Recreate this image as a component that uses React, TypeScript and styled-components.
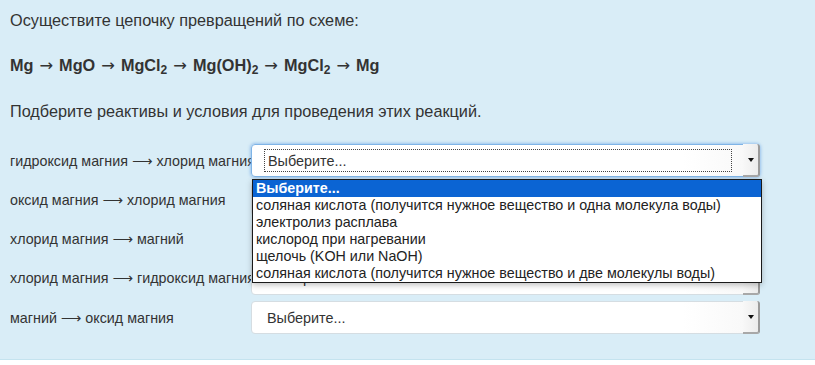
import React from "react";
import styled, { createGlobalStyle } from "styled-components";

const GlobalStyle = createGlobalStyle`
    html, body {
        margin: 0;
        padding: 0;
        background: #ffffff;
    }
    body {
        font-family: "Liberation Sans", Arial, sans-serif;
        color: #333333;
    }
`;

const Panel = styled.div`
    display: flex;
    flex-direction: column;
    background: #d9edf7;
    border-bottom: 1px solid #c4e3ef;
    padding: 10px 10px 25px 10px;
`;

const Text = styled.p<{ $bold?: boolean; $mb: number }>`
    margin: 0 0 ${(p) => p.$mb}px 0;
    font-size: 16.25px;
    line-height: 20px;
    font-weight: ${(p) => (p.$bold ? "bold" : "normal")};
    color: #333333;
`;

const Sub = styled.sub`
    font-size: 12px;
    vertical-align: -3px;
    line-height: 0;
`;

const Arr = styled.span<{ $long?: boolean }>`
    font-family: "DejaVu Sans", sans-serif;
    font-weight: normal;
    margin: 0 ${(p) => (p.$long ? "0" : "1.5px")};
`;

const Form = styled.div`
    display: flex;
    flex-direction: column;
    gap: 6.25px;
`;

const Row = styled.div`
    display: grid;
    grid-template-columns: 241px 509px;
    align-items: center;
    position: relative;
`;

const Label = styled.div`
    font-size: 14.3px;
    color: #333333;
    white-space: nowrap;
`;

const Select = styled.div<{ $focused?: boolean }>`
    display: flex;
    align-items: stretch;
    height: 33px;
    box-sizing: border-box;
    background: linear-gradient(to right, #ffffff 85%, #f7f7f7 100%);
    border: 1px solid ${(p) => (p.$focused ? "#7fb4e6" : "#d5dde2")};
    border-radius: 4px;
    box-shadow: ${(p) => (p.$focused ? "0 0 3px 1px rgba(102, 160, 230, 0.55)" : "none")};
`;

const Value = styled.div<{ $focused?: boolean }>`
    flex: 1;
    display: flex;
    align-items: center;
    padding: 0 0 0 ${(p) => (p.$focused ? "12px" : "15px")};
`;

const FocusRing = styled.div`
    flex: 1;
    display: flex;
    align-items: center;
    height: 21px;
    margin-right: 11px;
    padding-left: 3px;
    border: 1px dotted #444444;
    font-size: 14.4px;
    color: #333333;
`;

const ValueText = styled.span`
    font-size: 14.4px;
    color: #333333;
`;

const Arrow = styled.div`
    width: 15px;
    display: flex;
    align-items: center;
    justify-content: center;
    background: linear-gradient(to right, #f8f8f8, #ececec);
    border-right: 2px solid #9a9a9a;
    border-bottom: 2px solid #a8a8a8;
    border-radius: 0 3px 3px 0;
    margin: -1px -1px -1px 0;
`;

const Triangle = styled.span`
    width: 0;
    height: 0;
    border-left: 3px solid transparent;
    border-right: 3px solid transparent;
    border-top: 4px solid #111111;
`;

const Menu = styled.ul`
    position: absolute;
    left: 242px;
    top: 35px;
    width: 510px;
    box-sizing: border-box;
    margin: 0;
    padding: 0;
    list-style: none;
    background: #ffffff;
    border: 1px solid #1a1a1a;
    box-shadow: 0 2px 6px rgba(0, 0, 0, 0.25);
    z-index: 10;
`;

const Option = styled.li<{ $active?: boolean }>`
    height: 17px;
    line-height: 17px;
    padding: 0 3px;
    font-size: 14.3px;
    white-space: nowrap;
    color: ${(p) => (p.$active ? "#ffffff" : "#222222")};
    background: ${(p) => (p.$active ? "#0b64d3" : "transparent")};
    font-weight: ${(p) => (p.$active ? "bold" : "normal")};
`;

const rows = [
    ["гидроксид магния", "хлорид магния"],
    ["оксид магния", "хлорид магния"],
    ["хлорид магния", "магний"],
    ["хлорид магния", "гидроксид магния"],
    ["магний", "оксид магния"],
];

const options = [
    "Выберите...",
    "соляная кислота (получится нужное вещество и одна молекула воды)",
    "электролиз расплава",
    "кислород при нагревании",
    "щелочь (KOH или NaOH)",
    "соляная кислота (получится нужное вещество и две молекулы воды)",
];

const App = () => {
    return (
        <>
            <GlobalStyle />
            <Panel>
                <Text $mb={25}>Осуществите цепочку превращений по схеме:</Text>
                <Text $bold $mb={25}>
                    Mg <Arr>→</Arr> MgO <Arr>→</Arr> MgCl<Sub>2</Sub> <Arr>→</Arr> Mg(OH)<Sub>2</Sub>{" "}
                    <Arr>→</Arr> MgCl<Sub>2</Sub> <Arr>→</Arr> Mg
                </Text>
                <Text $mb={23}>Подберите реактивы и условия для проведения этих реакций.</Text>
                <Form>
                    {rows.map(([from, to], i) => (
                        <Row key={`row:${i}`}>
                            <Label>
                                {from} <Arr $long>⟶</Arr> {to}
                            </Label>
                            {i === 0 ? (
                                <Select $focused>
                                    <Value $focused>
                                        <FocusRing>Выберите...</FocusRing>
                                    </Value>
                                    <Arrow>
                                        <Triangle />
                                    </Arrow>
                                </Select>
                            ) : (
                                <Select>
                                    <Value>
                                        <ValueText>Выберите...</ValueText>
                                    </Value>
                                    <Arrow>
                                        <Triangle />
                                    </Arrow>
                                </Select>
                            )}
                            {i === 0 && (
                                <Menu>
                                    {options.map((o, j) => (
                                        <Option key={`opt:${j}`} $active={j === 0}>
                                            {o}
                                        </Option>
                                    ))}
                                </Menu>
                            )}
                        </Row>
                    ))}
                </Form>
            </Panel>
        </>
    );
};

export default App;
